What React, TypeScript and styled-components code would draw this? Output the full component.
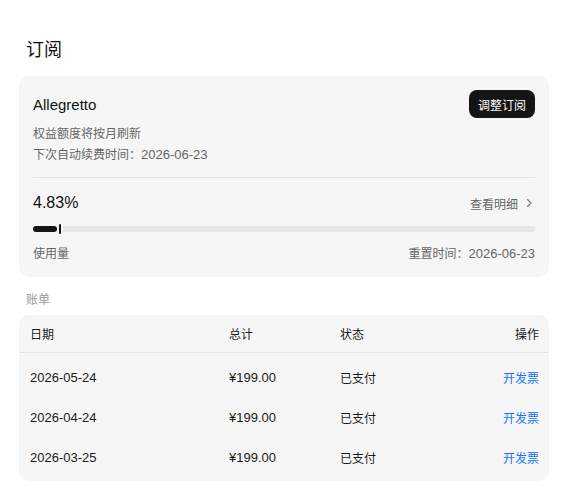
import React from "react";
import styled, { createGlobalStyle } from "styled-components";

const Global = createGlobalStyle`
  html, body { margin: 0; padding: 0; background: #ffffff; }
  body {
    font-family: "Liberation Sans", "Noto Sans CJK SC", sans-serif;
    color: #1a1a1a;
  }
  * { box-sizing: border-box; }
`;

const Page = styled.div`
  width: 570px;
  padding: 38px 21px 20px 19px;
  display: flex;
  flex-direction: column;
`;

const Title = styled.h1`
  margin: 0 0 14px 7px;
  font-size: 18px;
  line-height: 24px;
  font-weight: 400;
  color: #111;
`;

const Card = styled.section`
  background: #f6f6f6;
  border-radius: 10px;
  padding: 14px 14px 13px;
  display: flex;
  flex-direction: column;
`;

const HeadRow = styled.div`
  display: flex;
  align-items: center;
  justify-content: space-between;
  height: 28px;
`;

const PlanName = styled.div`
  font-size: 15px;
  font-weight: 400;
  color: #111;
`;

const DarkButton = styled.button`
  height: 28px;
  padding: 0 9px;
  border: none;
  border-radius: 8px;
  background: #141414;
  color: #fff;
  font-family: inherit;
  font-size: 12px;
  cursor: pointer;
`;

const Num = styled.span`
  font-size: 13px;
  line-height: 1;
`;

const Info = styled.div<{ $first?: boolean }>`
  margin-top: ${(p) => (p.$first ? "6px" : "0")};
  font-size: 12px;
  line-height: 21px;
  height: 21px;
  color: #666;
`;

const Divider = styled.hr`
  margin: 11px 0 0;
  border: none;
  border-top: 1px solid #e3e3e3;
`;

const UsageRow = styled.div`
  margin-top: 13px;
  display: flex;
  align-items: center;
  justify-content: space-between;
  height: 24px;
`;

const Percent = styled.div`
  font-size: 16px;
  color: #111;
`;

const DetailLink = styled.a`
  display: flex;
  align-items: center;
  gap: 5px;
  font-size: 12px;
  color: #666;
  cursor: pointer;
`;

const Bar = styled.div`
  margin-top: 9px;
  height: 10px;
  display: flex;
  align-items: center;
  gap: 2px;
`;

const Fill = styled.div`
  height: 6px;
  background: #141414;
  border-radius: 3px;
`;

const Marker = styled.div`
  width: 2px;
  height: 10px;
  background: #141414;
  border-radius: 1px;
`;

const Track = styled.div`
  flex: 1;
  height: 6px;
  background: #e6e6e6;
  border-radius: 0 3px 3px 0;
`;

const FootRow = styled.div`
  margin-top: 10px;
  display: flex;
  justify-content: space-between;
  font-size: 12px;
  line-height: 20px;
  height: 20px;
  color: #666;
`;

const SectionLabel = styled.div`
  margin: 14px 0 6px 7px;
  font-size: 12px;
  line-height: 18px;
  color: #999;
`;

const Table = styled.div`
  background: #f6f6f6;
  border-radius: 10px;
  padding-bottom: 4px;
`;

const Row = styled.div<{ $head?: boolean }>`
  display: grid;
  grid-template-columns: 199px 111px 1fr auto;
  align-items: center;
  height: ${(p) => (p.$head ? "38px" : "40px")};
  padding: 0 10px 0 11px;
  font-size: 12px;
  color: #1a1a1a;
  border-bottom: ${(p) => (p.$head ? "1px solid #e4e4e4" : "none")};
  margin-bottom: ${(p) => (p.$head ? "4px" : "0")};
`;

const Action = styled.a`
  color: #1677ff;
  cursor: pointer;
  text-align: right;
`;

const HeadCell = styled.div<{ $right?: boolean }>`
  text-align: ${(p) => (p.$right ? "right" : "left")};
`;

const bills = [
  { date: "2026-05-24", total: "¥199.00", status: "已支付" },
  { date: "2026-04-24", total: "¥199.00", status: "已支付" },
  { date: "2026-03-25", total: "¥199.00", status: "已支付" },
];

const Chevron = () => (
  <svg width="12" height="12" viewBox="0 0 12 12" fill="none">
    <path d="M4.5 2.5L8 6l-3.5 3.5" stroke="#777" strokeWidth="1.1" strokeLinecap="round" strokeLinejoin="round" />
  </svg>
);

export default function App() {
  const pct = 4.83;
  return (
    <>
      <Global />
      <Page>
        <Title>订阅</Title>
        <Card>
          <HeadRow>
            <PlanName>Allegretto</PlanName>
            <DarkButton>调整订阅</DarkButton>
          </HeadRow>
          <Info $first>权益额度将按月刷新</Info>
          <Info>
            下次自动续费时间：<Num>2026-06-23</Num>
          </Info>
          <Divider />
          <UsageRow>
            <Percent>{pct}%</Percent>
            <DetailLink>
              查看明细
              <Chevron />
            </DetailLink>
          </UsageRow>
          <Bar>
            <Fill style={{ width: `${pct}%` }} />
            <Marker />
            <Track />
          </Bar>
          <FootRow>
            <span>使用量</span>
            <span>
              重置时间：<Num>2026-06-23</Num>
            </span>
          </FootRow>
        </Card>
        <SectionLabel>账单</SectionLabel>
        <Table>
          <Row $head>
            <HeadCell>日期</HeadCell>
            <HeadCell>总计</HeadCell>
            <HeadCell>状态</HeadCell>
            <HeadCell $right>操作</HeadCell>
          </Row>
          {bills.map((b) => (
            <Row key={b.date}>
              <Num>{b.date}</Num>
              <Num>{b.total}</Num>
              <div>{b.status}</div>
              <Action>开发票</Action>
            </Row>
          ))}
        </Table>
      </Page>
    </>
  );
}
